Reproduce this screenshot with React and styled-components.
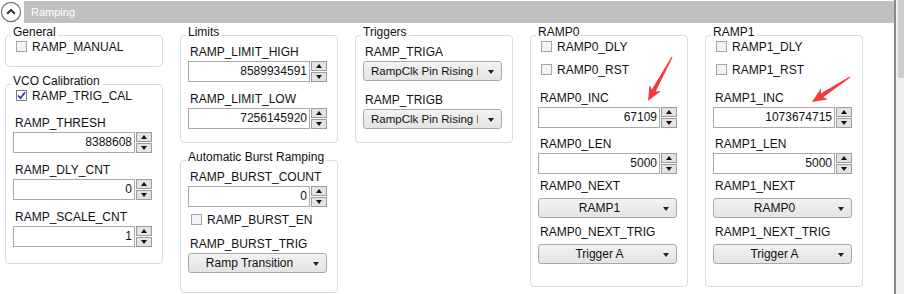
import styled, { createGlobalStyle } from 'styled-components';

const GlobalStyle = createGlobalStyle`
  html, body {
    margin: 0;
    padding: 0;
    background: #fff;
  }
  body {
    font-family: 'Liberation Sans', Arial, sans-serif;
    font-size: 12px;
    color: #111;
  }
`;

const SPage = styled.div`
  position: relative;
  display: flex;
  width: 904px;
  height: 294px;
  overflow: hidden;
`;

const SMain = styled.main`
  width: 896px;
  display: flex;
  flex-direction: column;
`;

const SDivider = styled.div`
  width: 2px;
  background: #8a8a8a;
`;

const SScrollTrack = styled.div`
  width: 6px;
  padding-left: 2px;
  background: #f0f0f0;
`;

const SScrollThumb = styled.div`
  height: 78px;
  background: #cdcdcd;
`;

const SHeader = styled.header`
  display: flex;
  align-items: center;
  gap: 2px;
  padding-top: 1px;
  height: 22px;
`;

const SHeaderBar = styled.div`
  flex: 1;
  height: 22px;
  background: #c0c0c0;
  color: #fff;
  font-size: 11px;
  line-height: 22px;
  padding-left: 7px;
`;

const SColumns = styled.div`
  display: flex;
  align-items: flex-start;
  gap: 17px;
  padding-left: 5px;
  margin-top: 2px;
`;

const SColumn = styled.div`
  display: flex;
  flex-direction: column;
  gap: 7px;
  width: 158px;
`;

const SPanel = styled.fieldset`
  margin: 0;
  min-width: 0;
  padding: 0 10px ${p => p.$pb ?? 13}px 7px;
  border: 1px solid #d6dce2;
  border-radius: 4px;
`;

const SLegend = styled.legend`
  margin-left: -2px;
  padding: 0 2px 5px;
  line-height: 15px;
  font-size: 12px;
  color: #111;
`;

const SField = styled.div`
  margin-top: ${p => p.$mt ?? 10}px;
  legend + & {
    margin-top: 0;
  }
`;

const SLabel = styled.div`
  line-height: 15px;
  padding-left: 2px;
  margin-bottom: ${p => p.$gap ?? 1}px;
  white-space: nowrap;
`;

const SCheckRow = styled.label`
  display: flex;
  align-items: center;
  gap: 5px;
  height: 15px;
  padding-left: 3px;
  margin-top: ${p => p.$mt ?? 8}px;
  legend + & {
    margin-top: -6px;
  }
`;

const SCheckBox = styled.span`
  display: flex;
  align-items: center;
  justify-content: center;
  width: 11px;
  height: 11px;
  box-sizing: border-box;
  border: 1px solid ${p => (p.$checked ? '#7a7a7a' : '#a5a5a5')};
  background: ${p => (p.$checked ? '#fff' : '#f3f3f3')};
`;

const SNumberBox = styled.div`
  display: flex;
  height: 21px;
`;

const SNumberInput = styled.div`
  flex: 1;
  box-sizing: border-box;
  border: 1px solid #a9a9a9;
  background: #fff;
  text-align: right;
  padding-right: 2px;
  line-height: 19px;
`;

const SSpinner = styled.div`
  display: flex;
  flex-direction: column;
  gap: 1px;
  width: 16px;
  margin-left: 1px;
`;

const SSpinButton = styled.div`
  flex: 1;
  display: flex;
  align-items: center;
  justify-content: center;
  box-sizing: border-box;
  border: 1px solid #9c9c9c;
  background: #e3e3e3;

  &::after {
    content: '';
    border-left: 3.5px solid transparent;
    border-right: 3.5px solid transparent;
    ${p => (p.$down ? 'border-top: 4px solid #111;' : 'border-bottom: 4px solid #111;')}
  }
`;

const SDropdown = styled.div`
  display: flex;
  align-items: center;
  height: 20px;
  box-sizing: border-box;
  border: 1px solid #a8a8a8;
  border-radius: 3px;
  background: linear-gradient(#f2f2f2, #e4e4e4);
  padding-left: 7px;
`;

const SDropText = styled.span`
  flex: 1;
  overflow: hidden;
  white-space: nowrap;
  font-size: ${p => (p.$center ? 12 : 11.5)}px;
  text-align: ${p => (p.$center ? 'center' : 'left')};
`;

const SDropArrow = styled.span`
  margin: 1px 7px 0 10px;
  border-left: 3.5px solid transparent;
  border-right: 3.5px solid transparent;
  border-top: 4px solid #222;
`;

const SOverlay = styled.svg`
  position: absolute;
  left: 0;
  top: 0;
  pointer-events: none;
`;

const CollapseIcon = () => (
  <svg width="22" height="22" viewBox="0 0 22 22">
    <circle cx="11" cy="11" r="9.6" fill="#fff" stroke="#7c7c7c" strokeWidth="1.3" />
    <polyline points="7.2,12.8 11,9 14.8,12.8" fill="none" stroke="#333" strokeWidth="2" />
  </svg>
);

const Check = ({ label, checked, mt }) => (
  <SCheckRow $mt={mt}>
    <SCheckBox $checked={checked}>
      {checked && (
        <svg width="9" height="9" viewBox="0 0 9 9">
          <polyline points="1,4.5 3.5,7.2 8,1.2" fill="none" stroke="#1c3fb0" strokeWidth="1.8" />
        </svg>
      )}
    </SCheckBox>
    <span>{label}</span>
  </SCheckRow>
);

const NumberField = ({ label, value, mt }) => (
  <SField $mt={mt}>
    <SLabel>{label}</SLabel>
    <SNumberBox>
      <SNumberInput>{value}</SNumberInput>
      <SSpinner>
        <SSpinButton />
        <SSpinButton $down />
      </SSpinner>
    </SNumberBox>
  </SField>
);

const SelectField = ({ label, value, center, mt, gap }) => (
  <SField $mt={mt}>
    <SLabel $gap={gap}>{label}</SLabel>
    <SDropdown>
      <SDropText $center={center}>{value}</SDropText>
      <SDropArrow />
    </SDropdown>
  </SField>
);

const arrowPoints = (x1, y1, x2, y2) => {
  const len = Math.hypot(x2 - x1, y2 - y1);
  const ux = (x2 - x1) / len;
  const uy = (y2 - y1) / len;
  const px = -uy;
  const py = ux;
  const at = (d, w) => `${(x1 + ux * d + px * w).toFixed(1)},${(y1 + uy * d + py * w).toFixed(1)}`;
  const neck = len - 12;
  return [at(0, 0.6), at(neck, 2.2), at(neck - 3, 6.5), at(len, 0), at(neck - 3, -6.5), at(neck, -2.2), at(0, -0.6)].join(' ');
};

const RampPanel = ({ n, inc, next }) => (
  <SPanel $pb={22}>
    <SLegend>RAMP{n}</SLegend>
    <Check label={`RAMP${n}_DLY`} />
    <Check label={`RAMP${n}_RST`} />
    <NumberField label={`RAMP${n}_INC`} value={inc} mt={14} />
    <NumberField label={`RAMP${n}_LEN`} value="5000" mt={9} />
    <SelectField label={`RAMP${n}_NEXT`} value={next} center mt={5} gap={4} />
    <SelectField label={`RAMP${n}_NEXT_TRIG`} value="Trigger A" center mt={7} gap={4} />
  </SPanel>
);

const App = () => {
  return (
    <SPage>
      <GlobalStyle />
      <SMain>
        <SHeader>
          <CollapseIcon />
          <SHeaderBar>Ramping</SHeaderBar>
        </SHeader>
        <SColumns>
          <SColumn>
            <SPanel $pb={12}>
              <SLegend>General</SLegend>
              <Check label="RAMP_MANUAL" />
            </SPanel>
            <SPanel $pb={16}>
              <SLegend>VCO Calibration</SLegend>
              <Check label="RAMP_TRIG_CAL" checked />
              <NumberField label="RAMP_THRESH" value="8388608" mt={13} />
              <NumberField label="RAMP_DLY_CNT" value="0" />
              <NumberField label="RAMP_SCALE_CNT" value="1" />
            </SPanel>
          </SColumn>
          <SColumn>
            <SPanel>
              <SLegend>Limits</SLegend>
              <NumberField label="RAMP_LIMIT_HIGH" value="8589934591" />
              <NumberField label="RAMP_LIMIT_LOW" value="7256145920" />
            </SPanel>
            <SPanel $pb={19}>
              <SLegend>Automatic Burst Ramping</SLegend>
              <NumberField label="RAMP_BURST_COUNT" value="0" />
              <Check label="RAMP_BURST_EN" mt={5} />
              <SelectField label="RAMP_BURST_TRIG" value="Ramp Transition" center mt={10} />
            </SPanel>
          </SColumn>
          <SColumn>
            <SPanel>
              <SLegend>Triggers</SLegend>
              <SelectField label="RAMP_TRIGA" value="RampClk Pin Rising Edge" />
              <SelectField label="RAMP_TRIGB" value="RampClk Pin Rising Edge" mt={12} />
            </SPanel>
          </SColumn>
          <SColumn>
            <RampPanel n={0} inc="67109" next="RAMP1" />
          </SColumn>
          <SColumn>
            <RampPanel n={1} inc="1073674715" next="RAMP0" />
          </SColumn>
        </SColumns>
      </SMain>
      <SDivider />
      <SScrollTrack>
        <SScrollThumb />
      </SScrollTrack>
      <SOverlay width="904" height="294">
        <polygon points={arrowPoints(672, 57, 648, 101)} fill="#f23b3b" />
        <polygon points={arrowPoints(850, 77, 812, 102)} fill="#f23b3b" />
      </SOverlay>
    </SPage>
  );
};

export default App;
